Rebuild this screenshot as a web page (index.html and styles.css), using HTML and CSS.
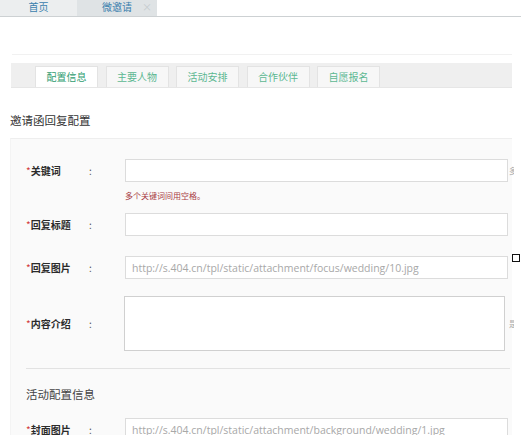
FILE: index.html
```html
<!DOCTYPE html>
<html lang="zh-CN">
<head>
    <meta charset="UTF-8">
    <title>微邀请</title>
    <link rel="stylesheet" href="styles.css">
</head>
<body>
    <div class="top-nav">
        <span class="nav-tab">首页</span>
        <span class="nav-tab current">微邀请<i class="close">×</i></span>
    </div>

    <div class="content">
        <div class="tab-wrap">
            <div class="tab-bar">
                <span class="tab active">配置信息</span>
                <span class="tab">主要人物</span>
                <span class="tab">活动安排</span>
                <span class="tab">合作伙伴</span>
                <span class="tab">自愿报名</span>
            </div>
        </div>

        <h3 class="section-title">邀请函回复配置</h3>

        <div class="panel">
            <div class="form-row first">
                <label><em>*</em>关键词</label>
                <span class="colon">:</span>
                <input type="text">
                <span class="side">多</span>
            </div>
            <p class="hint">多个关键词间用空格。</p>

            <div class="form-row after-hint">
                <label><em>*</em>回复标题</label>
                <span class="colon">:</span>
                <input type="text">
            </div>

            <div class="form-row">
                <label><em>*</em>回复图片</label>
                <span class="colon">:</span>
                <input type="text" placeholder="http://s.404.cn/tpl/static/attachment/focus/wedding/10.jpg">
                <span class="box"></span>
            </div>

            <div class="form-row tall">
                <label><em>*</em>内容介绍</label>
                <span class="colon">:</span>
                <textarea></textarea>
                <span class="side">是</span>
            </div>

            <hr class="divider">

            <h4 class="sub-title">活动配置信息</h4>

            <div class="form-row">
                <label><em>*</em>封面图片</label>
                <span class="colon">:</span>
                <input type="text" placeholder="http://s.404.cn/tpl/static/attachment/background/wedding/1.jpg">
            </div>
        </div>
    </div>
</body>
</html>
```

FILE: styles.css
```css
body {
    margin: 0;
    background: #fff;
    font-family: "Noto Sans CJK SC", "Noto Sans", sans-serif;
    color: #333;
    overflow: hidden;
}

/* top navigation */
.top-nav {
    display: flex;
    height: 16px;
    border-bottom: 1px solid #cdd1d3;
}
.nav-tab {
    position: relative;
    width: 77px;
    font-size: 10px;
    line-height: 13px;
    text-align: center;
    color: #3a80ad;
    background: #eceeef;
}
.nav-tab.current {
    width: 80px;
    background: #dfe3e5;
}
.nav-tab .close {
    position: absolute;
    right: 5px;
    top: 0;
    font-style: normal;
    font-size: 10px;
    color: #c5cbce;
}

.content {
    padding: 37px 9px 0 10px;
}

/* sub tabs */
.tab-wrap {
    margin-left: 2px;
    padding-top: 8px;
    border-top: 1px solid #f1f1f1;
}
.tab-bar {
    display: flex;
    gap: 7.5px;
    height: 24px;
    margin-left: -1px;
    padding-left: 24px;
    background: #efefef;
    border-bottom: 1px solid #e6e6e6;
    align-items: flex-end;
}
.tab {
    box-sizing: border-box;
    width: 63px;
    height: 21px;
    line-height: 20px;
    text-align: center;
    font-size: 10px;
    color: #5cb892;
    background: #f7f7f7;
    border: 1px solid #e3e3e3;
    border-bottom: none;
}
.tab.active {
    background: #fff;
    color: #2f9c70;
}

.section-title {
    margin: 24px 0 0;
    font-size: 11.5px;
    font-weight: normal;
    line-height: 16px;
    color: #333;
}

/* form panel */
.panel {
    margin-top: 10px;
    padding: 20px 0 20px 15px;
    background: #fafafa;
    border-top: 1px solid #eeeeee;
    border-left: 1px solid #f4f4f4;
}
.form-row {
    display: grid;
    grid-template-columns: 63px 36px 383px 12px;
    align-items: center;
    margin-top: 20px;
}
.form-row.first {
    margin-top: 0;
}
.form-row label {
    font-size: 10px;
    font-weight: bold;
    color: #2b2b2b;
}
.form-row em {
    font-style: normal;
    font-weight: normal;
    color: #d23a3a;
}
.colon {
    font-size: 10px;
    color: #555;
}
.form-row input,
.form-row textarea {
    box-sizing: border-box;
    width: 383px;
    height: 23px;
    margin: 0;
    padding: 0 6px;
    border: 1px solid #dcdcdc;
    background: #fff;
    font-family: "Open Sans", sans-serif;
    font-size: 10.5px;
    color: #999;
}
.form-row input::placeholder {
    color: #a8a8a8;
}
.form-row.tall {
    margin-top: 17px;
}
.form-row textarea {
    width: 381px;
    height: 55px;
    margin-left: -1px;
    resize: none;
    border-color: #d0d0d0;
}
.side {
    font-size: 8px;
    color: #aaa;
    padding-left: 1px;
    overflow: hidden;
    width: 5px;
}
.box {
    align-self: start;
    width: 6px;
    height: 6px;
    margin: -2px 0 0 4px;
    border: 1px solid #111;
}

.hint {
    margin: 8px 0 0 99px;
    font-size: 8px;
    line-height: 12px;
    color: #a83a44;
}
.form-row.after-hint {
    margin-top: 11px;
}

.divider {
    margin: 17px 2px 0 0;
    border: none;
    border-top: 1px solid #e2e2e2;
}
.sub-title {
    margin: 17px 0 0;
    font-size: 11.5px;
    font-weight: normal;
    line-height: 16px;
    color: #444;
}
.sub-title + .form-row {
    margin-top: 16px;
}
```
